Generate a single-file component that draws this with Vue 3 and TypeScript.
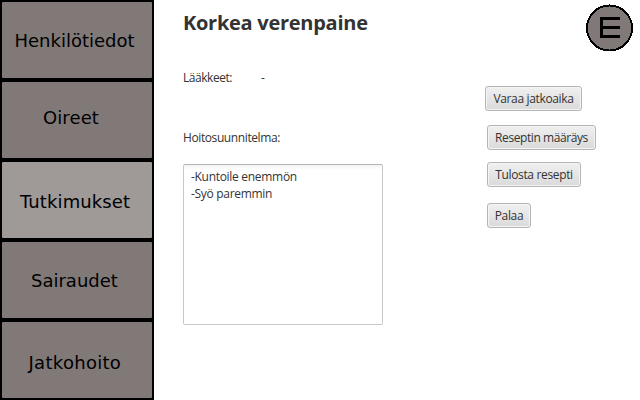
<script setup lang="ts">
interface NavItem {
  label: string
  key: string
  active?: boolean
}

const navItems: NavItem[] = [
  { label: 'Henkilötiedot', key: 'info' },
  { label: 'Oireet', key: 'symptoms' },
  { label: 'Tutkimukset', key: 'exams', active: true },
  { label: 'Sairaudet', key: 'diseases' },
  { label: 'Jatkohoito', key: 'followup' },
]

const plan: string[] = ['-Kuntoile enemmön', '-Syö paremmin']
</script>

<template>
  <div class="window">
    <nav class="sidebar">
      <div v-for="item in navItems" :key="item.key" class="nav-item" :class="[item.key, { active: item.active }]">
        <span class="nav-label">{{ item.label }}</span>
      </div>
    </nav>
    <main class="content">
      <h1 class="title">Korkea verenpaine</h1>
      <div class="medicine">
        <span class="medicine-name">Lääkkeet:</span>
        <span>-</span>
      </div>
      <div class="plan-label">Hoitosuunnitelma:</div>
      <div class="plan">
        <div v-for="line in plan" :key="line" class="plan-line"><span>{{ line }}</span></div>
      </div>
    </main>
    <aside class="actions">
      <svg class="badge" width="48" height="48" viewBox="0 0 48 48" shape-rendering="crispEdges">
        <circle cx="23.5" cy="24" r="22.5" fill="#807978" stroke="#000" stroke-width="2" />
        <path d="M34 14.5H15.5V32.5H34M15.5 23.5H34" fill="none" stroke="#000" stroke-width="3" />
      </svg>
      <button class="btn book">Varaa jatkoaika</button>
      <button class="btn prescribe">Reseptin määräys</button>
      <button class="btn print">Tulosta resepti</button>
      <button class="btn back">Palaa</button>
    </aside>
  </div>
</template>

<style>
body {
  margin: 0;
  background: #fff;
}
</style>

<style scoped>
.window {
  display: flex;
  width: 640px;
  height: 400px;
  overflow: hidden;
  color: #333;
  font: 12px/18px 'Open Sans', 'Noto Sans', sans-serif;
  letter-spacing: -0.35px;
  white-space: nowrap;
}
.sidebar {
  width: 154px;
  height: 400px;
  flex: none;
  background: #000;
}
.nav-item {
  box-sizing: border-box;
  height: 80px;
  border: 2px solid #000;
  background: #807978;
  border-radius: 3px;
  color: #000;
  font: 18px/22px 'DejaVu Sans', sans-serif;
  letter-spacing: 0;
  padding: 28px 0 0 12.5px;
}
.nav-item.active {
  background: #9f9998;
}
.symptoms {
  padding: 25px 0 0 41px;
  letter-spacing: 0.1px;
}
.exams {
  padding: 29px 0 0 18px;
  letter-spacing: 0.1px;
}
.diseases {
  padding: 28px 0 0 29px;
}
.followup {
  padding: 30px 0 0 26.5px;
  letter-spacing: 0.3px;
}
.content {
  width: 200px;
  flex: none;
  padding-left: 29px;
}
.title {
  margin: 0;
  padding-top: 9px;
  box-sizing: border-box;
  height: 69px;
  font-size: 20px;
  line-height: 28px;
  font-weight: 700;
  letter-spacing: -0.27px;
}
.medicine {
  display: flex;
  height: 60px;
}
.medicine-name {
  width: 78px;
  letter-spacing: -0.45px;
}
.plan-label {
  height: 35px;
  letter-spacing: -0.4px;
}
.plan {
  box-sizing: border-box;
  width: 200px;
  height: 161px;
  padding: 3px 7px;
  border: 1px solid #c8c8c8;
  border-top-color: #b5b5b5;
  border-radius: 2px;
  background: linear-gradient(#f3f3f3, #fff 5px);
}
.plan-line {
  height: 17px;
  line-height: 17px;
  letter-spacing: -0.3px;
}
.actions {
  display: flex;
  flex-direction: column;
  align-items: flex-start;
  padding: 4px 0 0 104px;
}
.badge {
  display: block;
  flex: none;
  margin: 0 0 34px 99px;
}
.btn {
  box-sizing: border-box;
  height: 25px;
  flex: none;
  padding: 0;
  border: 1px solid #b5b5b5;
  border-radius: 3px;
  background: linear-gradient(#f0f0f0, #dadada);
  box-shadow: inset 0 0 0 1px #f4f4f4;
  color: #333;
  font: inherit;
  letter-spacing: inherit;
  text-align: center;
}
.book {
  width: 97px;
  margin: 0 0 14px -2px;
}
.prescribe {
  width: 109px;
  margin: 0 0 12px;
  letter-spacing: -0.42px;
}
.print {
  width: 94px;
  margin: 0 0 16px;
}
.back {
  width: 44px;
  margin: 0;
}
</style>
